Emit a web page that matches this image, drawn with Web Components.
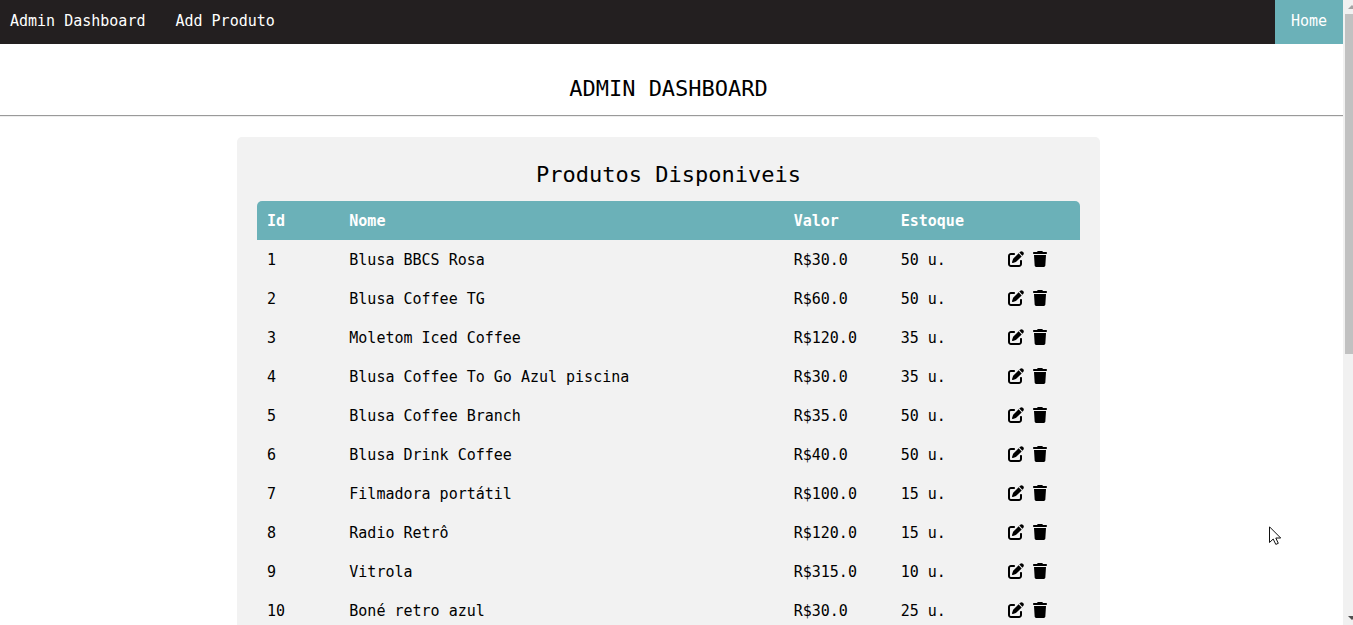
<!DOCTYPE html>
<html lang="pt-BR">
<head>
<meta charset="utf-8">
<meta name="viewport" content="width=device-width, initial-scale=1">
<title>Admin Dashboard</title>
<style>
  html, body { margin: 0; height: 100%; overflow: hidden; }
  body { background: #fff; color: #000; font: 15px/19px "DejaVu Sans Mono", "Liberation Mono", monospace; }
</style>
</head>
<body>
<admin-page>
  <top-nav slot="nav">
    <nav-link href="#admin">Admin Dashboard</nav-link>
    <nav-link href="#add">Add Produto</nav-link>
    <nav-link slot="end" href="#home" active>Home</nav-link>
  </top-nav>
  <page-title slot="title">ADMIN DASHBOARD</page-title>
  <product-panel>
    <span slot="heading">Produtos Disponiveis</span>
    <product-table></product-table>
  </product-panel>
</admin-page>
<mouse-pointer></mouse-pointer>

<script>
const define = (name, html, setup) => {
  const template = document.createElement('template');
  template.innerHTML = html;
  customElements.define(name, class extends HTMLElement {
    constructor() {
      super();
      this.attachShadow({ mode: 'open' }).append(template.content.cloneNode(true));
    }
    connectedCallback() { if (setup) setup(this, this.shadowRoot); }
  });
};

define('admin-page', `
  <style>
    :host { display: flex; height: 100vh; }
    .view { flex: 1; min-width: 0; overflow: hidden; }
    hr { margin: 0; border: 0; height: 1px; background: #9a9a9a; border-bottom: 1px solid #eee; }
    main { padding: 20px 6px 20px 0; }
  </style>
  <div class="view">
    <slot name="nav"></slot>
    <slot name="title"></slot>
    <hr>
    <main><slot></slot></main>
  </div>
  <scroll-rail></scroll-rail>
`);

define('scroll-rail', `
  <style>
    :host { display: flex; flex-direction: column; width: 10px; box-sizing: border-box; padding-left: 2px; background: #f1f1f1; overflow: hidden; }
    .cap { height: 14px; display: flex; align-items: center; padding-left: 3px; }
    .track { flex: 1; }
    .thumb { height: 57%; background: #c1c1c1; }
    svg { display: block; flex: none; }
  </style>
  <div class="cap"><svg width="8" height="4" viewBox="0 0 8 4"><path d="M0 4 4 0 8 4z" fill="#a3a3a3"/></svg></div>
  <div class="track"><div class="thumb"></div></div>
  <div class="cap"><svg width="8" height="4" viewBox="0 0 8 4"><path d="M0 0 4 4 8 0z" fill="#505050"/></svg></div>
`);

define('top-nav', `
  <style>
    :host { display: block; background: #231f20; }
    nav { display: flex; justify-content: space-between; }
    .start { display: flex; }
    .start ::slotted(:first-child) { --pad-start: 10px; }
  </style>
  <nav><div class="start"><slot></slot></div><slot name="end"></slot></nav>
`);

define('nav-link', `
  <style>
    :host { display: block; }
    a { display: block; box-sizing: border-box; height: 44px; line-height: 42px; padding: 0 15px 0 var(--pad-start, 15px); color: #fff; text-decoration: none; }
    :host([active]) a { background: #6bb1b8; padding: 0 16px; }
  </style>
  <a><slot></slot></a>
`, (host, root) => { root.querySelector('a').href = host.getAttribute('href'); });

define('page-title', `
  <style>
    :host { display: block; padding: 31px 6px 12px 0; }
    h1 { margin: 0; font-size: 22px; line-height: 28px; font-weight: 400; text-align: center; }
  </style>
  <h1><slot></slot></h1>
`);

define('product-panel', `
  <style>
    :host { display: block; box-sizing: border-box; max-width: 863px; margin: 0 auto; padding: 20px; background: #f2f2f2; border-radius: 5px; }
    h2 { margin: 4px 0 12px; font-size: 22px; line-height: 28px; font-weight: 400; text-align: center; }
  </style>
  <h2><slot name="heading"></slot></h2>
  <slot></slot>
`);

define('fa-icon', `
  <style>
    :host { display: block; }
    svg { display: block; height: 16px; fill: currentColor; }
  </style>
  <svg aria-hidden="true"><path/></svg>
`, (host, root) => {
  const icons = {
    edit: [512, 'M471.6 21.7c-21.9-21.9-57.3-21.9-79.2 0L362.3 51.7l97.9 97.9 30.1-30.1c21.9-21.9 21.9-57.3 0-79.2L471.6 21.7zm-299.2 220c-6.1 6.1-10.8 13.6-13.5 21.9l-29.6 88.8c-2.9 8.6-.6 18.1 5.8 24.6s15.9 8.7 24.6 5.8l88.8-29.6c8.2-2.7 15.7-7.4 21.9-13.5L437.7 172.3 339.7 74.3 172.4 241.7zM96 64C43 64 0 107 0 160V416c0 53 43 96 96 96H352c53 0 96-43 96-96V320c0-17.7-14.3-32-32-32s-32 14.3-32 32v96c0 17.7-14.3 32-32 32H96c-17.7 0-32-14.3-32-32V160c0-17.7 14.3-32 32-32h96c17.7 0 32-14.3 32-32s-14.3-32-32-32H96z'],
    trash: [448, 'M135.2 17.7L128 32H32C14.3 32 0 46.3 0 64S14.3 96 32 96H416c17.7 0 32-14.3 32-32s-14.3-32-32-32H320l-7.2-14.3C307.4 6.8 296.3 0 284.2 0H163.8c-12.1 0-23.2 6.8-28.6 17.7zM416 128H32L53.2 467c1.6 25.3 22.6 45 47.9 45H346.9c25.3 0 46.3-19.7 47.9-45L416 128z']
  };
  const [width, path] = icons[host.getAttribute('name')];
  const svg = root.querySelector('svg');
  svg.setAttribute('viewBox', `0 0 ${width} 512`);
  svg.setAttribute('width', width / 32);
  root.querySelector('path').setAttribute('d', path);
});

const products = [
  [1, 'Blusa BBCS Rosa', '30.0', 50],
  [2, 'Blusa Coffee TG', '60.0', 50],
  [3, 'Moletom Iced Coffee', '120.0', 35],
  [4, 'Blusa Coffee To Go Azul piscina', '30.0', 35],
  [5, 'Blusa Coffee Branch', '35.0', 50],
  [6, 'Blusa Drink Coffee', '40.0', 50],
  [7, 'Filmadora portátil', '100.0', 15],
  [8, 'Radio Retrô', '120.0', 15],
  [9, 'Vitrola', '315.0', 10],
  [10, 'Boné retro azul', '30.0', 25]
];

define('product-table', `
  <style>
    :host { display: block; }
    table { width: 100%; table-layout: fixed; border-collapse: separate; border-spacing: 0; border-radius: 5px 5px 0 0; overflow: hidden; }
    .s { width: 10%; } .l { width: 54%; } .m { width: 13%; }
    th, td { padding: 11px 10px 9px; text-align: left; line-height: 19px; }
    th { background: #6bb1b8; color: #fff; }
    .actions { display: flex; gap: 9px; height: 19px; align-items: flex-start; }
    a { color: #000; display: block; }
  </style>
  <table>
    <colgroup><col class="s"><col class="l"><col class="m"><col class="m"><col class="s"></colgroup>
    <thead><tr><th>Id</th><th>Nome</th><th>Valor</th><th>Estoque</th><th></th></tr></thead>
    <tbody></tbody>
  </table>
`, (host, root) => {
  root.querySelector('tbody').innerHTML = products.map(([id, name, price, stock]) => `
    <tr><td>${id}</td><td>${name}</td><td>R$${price}</td><td>${stock} u.</td>
    <td><div class="actions"><a href="#edit-${id}" aria-label="Editar"><fa-icon name="edit"></fa-icon></a><a href="#delete-${id}" aria-label="Excluir"><fa-icon name="trash"></fa-icon></a></div></td></tr>`).join('');
});

define('mouse-pointer', `
  <style>
    :host { position: absolute; left: 1269px; top: 526px; pointer-events: none; }
    svg { display: block; }
  </style>
  <svg width="13" height="20" viewBox="0 0 13 20" aria-hidden="true"><path d="M.5.8V16.5L4.2 13l2.6 5.4 2.5-1.1L6.8 12h4.9z" fill="#fff" stroke="#111" stroke-width="1"/></svg>
`);
</script>
</body>
</html>
